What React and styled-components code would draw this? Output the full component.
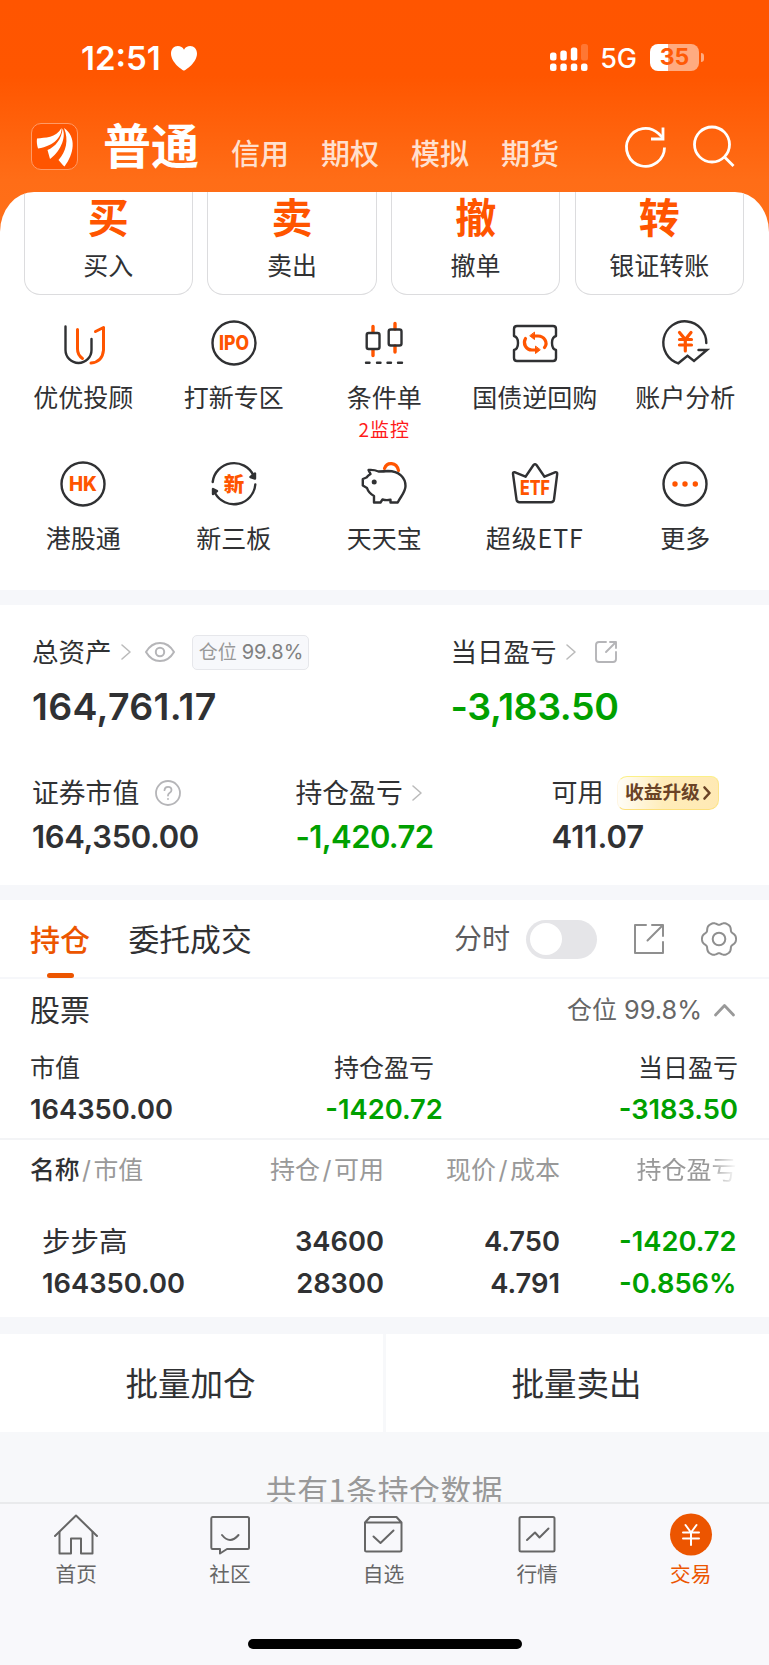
import * as React from "react";
import styled, { createGlobalStyle, css, ThemeProvider } from "styled-components";

const theme = {
  orange: "#ff5500",
  accent: "#ec5500",
  ink: "#303133",
  green: "#00a000",
  mute: "#999",
  band: "#f6f7fa",
};

const GlobalStyle = createGlobalStyle`
  * {
    box-sizing: border-box;
  }
  body {
    margin: 0;
    font-family: Inter, "Noto Sans CJK SC", sans-serif;
    color: ${theme.ink};
    -webkit-font-smoothing: antialiased;
  }
  svg {
    display: block;
    flex: none;
    overflow: visible;
  }
`;

const Phone = styled.div`
  width: 769px;
  height: 1665px;
  display: flex;
  flex-direction: column;
  overflow: hidden;
  background: #f7f8fa;
`;

const Text = styled.span`
  display: block;
  white-space: nowrap;
  line-height: 1;
  font-size: ${({ size }) => size}px;
  font-weight: ${({ weight }) => weight || 400};
  color: ${({ color }) => color || "inherit"};
  letter-spacing: ${({ spacing }) => spacing || 0}px;
  ${({ cjk }) =>
    cjk &&
    css`
      font-family: "Noto Sans CJK SC", sans-serif;
    `}
`;

/* ---------- header ---------- */

const Top = styled.header`
  height: 232px;
  margin-bottom: -40px;
  flex: none;
  color: #fff;
  background: linear-gradient(#ff5500 0, #ff5600 76px, #ff6d17 180px, #ff7019 232px);
`;

const StatusBar = styled.div`
  height: 116px;
  padding: 0 65px 0 81px;
  display: flex;
  align-items: center;
`;

const StatusRight = styled.div`
  margin-left: auto;
  display: flex;
  align-items: center;
`;

const Battery = styled.div`
  width: 49px;
  height: 27px;
  margin: -2px 0 0 13px;
  padding-top: 1px;
  border-radius: 8px;
  background: linear-gradient(90deg, #fff 36%, #ffab80 36%);
  display: flex;
  align-items: center;
  justify-content: center;
`;

const BatteryNub = styled.div`
  width: 3px;
  height: 9px;
  margin: -2px 0 0 2px;
  border-radius: 0 4px 4px 0;
  background: #ffab80;
`;

const NavBar = styled.nav`
  height: 76px;
  padding: 7px 34px 0 31px;
  display: flex;
`;

const Logo = styled.div`
  width: 47px;
  height: 47px;
  border: 1px solid #ff9a66;
  border-radius: 10px;
  background: #ff5500;
`;

const AccountTabs = styled.div`
  display: flex;
  padding: 17px 0 0 32px;
  gap: 32px;
`;

const NavIcons = styled.div`
  margin-left: auto;
  display: flex;
  gap: 27px;
  padding-top: 3px;
`;

/* ---------- white sheet ---------- */

const Sheet = styled.section`
  height: 398px;
  flex: none;
  background: #fff;
  border-radius: 34px 34px 0 0 / 40px 40px 0 0;
  overflow: hidden;
`;

const Cards = styled.div`
  display: grid;
  grid-template-columns: repeat(4, 169.5px);
  gap: 14.2px;
  padding-left: 23.5px;
  height: 103px;
`;

const Card = styled.div`
  border: 1.5px solid #dcdcde;
  border-top: 0;
  border-radius: 0 0 16px 16px;
  display: flex;
  flex-direction: column;
  align-items: center;
  padding-top: 6px;
  gap: 15px;
`;

const Grid = styled.div`
  display: grid;
  grid-template-columns: repeat(5, 150.5px);
  grid-auto-rows: 141px;
  padding: 24px 0 0 8px;
`;

const Cell = styled.div`
  display: flex;
  flex-direction: column;
  align-items: center;

  .Cell-label {
    margin-top: 16.5px;
  }
  .Cell-note {
    margin-top: 10px;
  }
`;

/* ---------- assets ---------- */

const Band = styled.div`
  height: ${({ height }) => height || 15}px;
  flex: none;
  background: ${theme.band};
`;

const Assets = styled.section`
  height: 280px;
  flex: none;
  padding-top: 29px;
  background: #fff;
`;

const AssetRow = styled.div`
  display: grid;
  grid-template-columns: ${({ columns }) => columns};
  padding-left: 32px;
  height: ${({ height }) => height}px;
`;

const Label = styled.div`
  height: 36px;
  display: flex;
  align-items: center;
`;

const Tag = styled.div`
  height: 35px;
  width: 117px;
  margin-left: 17px;
  padding-left: 2px;
  border: 1.5px solid #e6e7eb;
  border-radius: 5px;
  background: #f7f8fb;
  display: flex;
  align-items: center;
  justify-content: center;
  gap: 5px;
`;

const Upgrade = styled.div`
  height: 34px;
  width: 102px;
  margin-left: 13px;
  padding-left: 7.5px;
  border: 1.5px solid;
  border-color: #fbf088 #fde58a #fde07c #fff6e2;
  border-radius: 10px 8px 10px 8px;
  background: linear-gradient(90deg, #fffdf8, #ffedba 45%, #ffe9b4);
  display: flex;
  align-items: center;
  gap: 3px;
`;

/* ---------- positions ---------- */

const White = styled.section`
  flex: none;
  background: #fff;
`;

const PositionTabs = styled.div`
  height: 79px;
  padding: 1px 32px 0 30px;
  display: flex;
  align-items: center;
  border-bottom: 2px solid #f6f7fa;
`;

const PositionTab = styled.div`
  height: 77px;
  margin-right: ${({ gap }) => gap || 0}px;
  padding-top: 24px;
  display: flex;
  flex-direction: column;
  align-items: center;
  gap: 18px;

  &:after {
    content: "";
    width: 27px;
    height: 6px;
    border-radius: 3px;
    background: ${({ active }) => (active ? theme.accent : "transparent")};
  }
`;

const Toggle = styled.div`
  width: 71px;
  height: 39px;
  margin: 0 37px 0 16px;
  padding: 3.5px 4px;
  border-radius: 20px;
  background: #e5e5e8;

  &:after {
    content: "";
    display: block;
    width: 32px;
    height: 32px;
    border-radius: 50%;
    background: #fff;
  }
`;

const GroupHead = styled.div`
  height: 62px;
  padding: 0 34px 0 30px;
  display: flex;
  align-items: center;
`;

const Summary = styled.div`
  height: 99px;
  padding: 15px 31px 0 30px;
  display: grid;
  grid-template-columns: 1fr 1fr 1fr;
  border-bottom: 2px solid #f3f4f6;
`;

const SummaryItem = styled.div`
  display: flex;
  flex-direction: column;
  align-items: ${({ align }) => align};
  gap: 15px;
`;

const Columns = styled.div`
  height: ${({ height }) => height}px;
  padding: 0 32.5px 0 ${({ indent }) => indent}px;
  display: grid;
  grid-template-columns: 1fr 176px 176.5px;
  align-items: center;
  justify-items: end;
`;

const FirstColumns = styled.div`
  width: 100%;
  display: flex;
  justify-content: space-between;
`;

const Slash = styled.span`
  margin: 0 2.5px;
  &:after {
    content: "/";
  }
`;

const Fade = styled.div`
  -webkit-mask-image: linear-gradient(90deg, #000 72%, transparent 100%);
  mask-image: linear-gradient(90deg, #000 72%, transparent 100%);
`;

const Batch = styled.div`
  flex: none;
  height: 98px;
  display: grid;
  grid-template-columns: 383px 383px;
  gap: 3px;
`;

const BatchButton = styled.div`
  display: flex;
  align-items: center;
  justify-content: center;
  padding: 4px 2px 0 0;
  background: #fff;
`;

const Footnote = styled.div`
  height: 70px;
  flex: none;
  overflow: hidden;
  padding-top: 42px;
  display: flex;
  justify-content: center;
`;

/* ---------- tab bar ---------- */

const TabBar = styled.footer`
  flex: 1;
  border-top: 2px solid #e9eaec;
  background: #f8f8fb;
  display: flex;
  flex-direction: column;
  align-items: center;
`;

const TabList = styled.div`
  width: 768px;
  height: 135px;
  margin-right: 2px;
  padding-top: 10px;
  display: grid;
  grid-template-columns: repeat(5, 1fr);
`;

const Tab = styled.div`
  display: flex;
  flex-direction: column;
  align-items: center;
  gap: 9px;
  color: ${({ active }) => (active ? theme.accent : "#666")};
`;

const HomeIndicator = styled.div`
  width: 274px;
  height: 10px;
  border-radius: 5px;
  background: #000;
`;

/* ---------- icons ---------- */

const Svg = ({ w = 48, h = w, stroke = theme.ink, width = 2.4, children, ...rest }) => (
  <svg
    width={w}
    height={h}
    viewBox={`0 0 ${w} ${h}`}
    fill="none"
    stroke={stroke}
    strokeWidth={width}
    strokeLinecap="round"
    strokeLinejoin="round"
    {...rest}
  >
    {children}
  </svg>
);

const IconWord = ({ y, size, children, ...rest }) => (
  <text
    x="24"
    y={y}
    fontSize={size}
    fontWeight="800"
    fontFamily='Inter, "Noto Sans CJK SC", sans-serif'
    textAnchor="middle"
    fill={theme.orange}
    stroke="none"
    {...rest}
  >
    {children}
  </text>
);

const Heart = () => (
  <Svg w={28} h={26} stroke="none" style={{ marginLeft: 9 }}>
    <path
      fill="#fff"
      d="M14 25.5C12.5 25.5 1 17.5 1 8.5C1 4 4 1 7.8 1C10.5 1 12.8 2.3 14 4.7C15.2 2.3 17.5 1 20.2 1C24 1 27 4 27 8.5C27 17.5 15.5 25.5 14 25.5Z"
    />
  </Svg>
);

const Signal = () => (
  <Svg w={39} h={27} stroke="none" style={{ marginRight: 12, marginTop: -2 }}>
    <g fill="#fff">
      <rect x="1" y="8.5" width="6.5" height="8" rx="2.5" />
      <rect x="11.3" y="6.5" width="6.5" height="10" rx="2.5" />
      <rect x="21.8" y="3.5" width="6.5" height="13" rx="2.5" />
      <rect x="32" y="0" width="7" height="16.5" rx="2.5" opacity="0.2" />
      <rect x="1" y="19.5" width="6.5" height="7.5" rx="2.5" />
      <rect x="11.3" y="19.5" width="6.5" height="7.5" rx="2.5" />
      <rect x="21.8" y="19.5" width="6.5" height="7.5" rx="2.5" />
      <rect x="32" y="19.5" width="6.5" height="7.5" rx="2.5" />
    </g>
  </Svg>
);

const LogoMark = () => (
  <Svg w={45} h={45} stroke="none">
    <g fill="#fff">
      <path d="M5 14.5C13 13.5 24 14 29.5 4C30 12 23 22 6 24.5C5 21 4.5 18 5 14.5Z" />
      <path d="M15.5 26C23 23 30 15 30.5 4.5C35 14 27 29 18 35Z" />
      <path d="M32 4C45 13 42 30 32.5 42.5C30.5 41 28.5 38 26.5 36C34 28 37 16 32 4Z" />
    </g>
  </Svg>
);

const Refresh = () => (
  <Svg w={42} stroke="#fff" width={2.8} strokeLinecap="butt" strokeLinejoin="miter">
    <path d="M40.5 21.5A19 19 0 1 1 34.5 7.5L39 12" />
    <path d="M39 1.5V13H27" />
  </Svg>
);

const Search = () => (
  <Svg w={42} stroke="#fff" width={2.8} strokeLinecap="butt">
    <circle cx="19" cy="18.5" r="17.5" />
    <path d="M31 30.5L40.5 40" />
  </Svg>
);

const Chevron = () => (
  <Svg w={10} h={16} stroke="#bbb" width={1.6} style={{ marginLeft: 9 }}>
    <path d="M1 1L9 8L1 15" />
  </Svg>
);

const Eye = () => (
  <Svg w={30} h={20} stroke="#b5b5b8" width={2} style={{ marginLeft: 14 }}>
    <path d="M1 10C8-2 22-2 29 10C22 22 8 22 1 10Z" />
    <circle cx="15" cy="10" r="4.2" />
  </Svg>
);

const ShareSmall = () => (
  <Svg w={22} stroke="#b5b5b8" width={1.9} style={{ marginLeft: 19 }}>
    <path d="M11 1H4Q1 1 1 4V18Q1 21 4 21H18Q21 21 21 18V11" />
    <path d="M11 11L21 1M15 1H21V7" />
  </Svg>
);

const ShareLarge = () => (
  <Svg w={30} stroke="#8f8f8f" width={2} style={{ marginRight: 37 }}>
    <path d="M12 1H1V29H29V18" />
    <path d="M13.5 16.5L29 1M18 1H29V12" />
  </Svg>
);

const Question = () => (
  <Svg w={26} stroke="#b5b5b8" width={1.8} style={{ marginLeft: 16 }}>
    <circle cx="13" cy="13" r="12" />
    <path d="M9.5 10.2Q9.7 6.8 13 6.8Q16.5 6.8 16.5 10Q16.5 11.8 14.5 13Q13 14 13 15.5M13 18.8V19" />
  </Svg>
);

// six soft teeth, one pointing straight left and one straight right
const gearPath = Array.from({ length: 120 }, (_, i) => {
  const a = (i / 120) * Math.PI * 2;
  const r = 15.9 + 1.4 * Math.cos(6 * a) - 0.3 * Math.cos(12 * a);
  return `${i ? "L" : "M"}${(18 + r * Math.cos(a)).toFixed(2)} ${(18 + r * Math.sin(a)).toFixed(2)}`;
}).join("");

const Gear = () => (
  <Svg w={36} stroke="#8f8f8f" width={2}>
    <path d={`${gearPath}Z`} />
    <circle cx="18" cy="18" r="6.3" />
  </Svg>
);

const O = theme.orange;

const shortcuts = [
  {
    label: "优优投顾",
    icon: (
      <Svg>
        <path d="M18.5 10.5V30Q18.5 36 23.5 39.5M36.5 12.5L44.5 8.5V31Q43.5 43 32 44" stroke={O} strokeWidth="3" />
        <path d="M6.5 7.5V31A13 13 0 0 0 32.5 31V20" />
      </Svg>
    ),
  },
  {
    label: "打新专区",
    icon: (
      <Svg>
        <circle cx="24" cy="24" r="21.5" />
        <IconWord y="31" size="19.5" textLength="30" lengthAdjust="spacingAndGlyphs">IPO</IconWord>
      </Svg>
    ),
  },
  {
    label: "条件单",
    note: "2监控",
    icon: (
      <Svg>
        <path d="M13 7.5V13M13 31V36.5M35 4.5V10M35 27V33" stroke={O} strokeWidth="3.4" />
        <rect x="6.7" y="14" width="12.8" height="16" rx="2" />
        <rect x="28.7" y="10.5" width="12.8" height="16" rx="2" />
        <path d="M6 43.7H9.5M17 43.7H20.5M27.5 43.7H31M38 43.7H42" />
      </Svg>
    ),
  },
  {
    label: "国债逆回购",
    icon: (
      <Svg>
        <path d="M6 7H42Q45 7 45 10V17Q41 18 41 24Q41 30 45 31V39Q45 42 42 42H6Q3 42 3 39V31Q7 30 7 24Q7 18 3 17V10Q3 7 6 7Z" />
        <path d="M14.5 19.5C11.5 24.5 15 31 21 31H25M33.5 28.5C37.5 23.5 33 17 27 17H23" stroke={O} strokeWidth="3.2" />
        <path d="M23.5 13.5V20.5L19 17ZM24.5 27.5V34.5L29 31Z" fill={O} stroke={O} strokeWidth="1" />
      </Svg>
    ),
  },
  {
    label: "账户分析",
    icon: (
      <Svg>
        <path d="M45.3 24A21.5 21.5 0 1 0 17.3 44.3L26.5 36.8L33 42L46 31H37.5" strokeLinejoin="miter" />
        <path d="M18.5 13.5L24.3 20.5L30 13.5M18.5 20.5H30.5M18.5 26H30.5M24.3 20.5V32" stroke={O} strokeWidth="3.2" />
      </Svg>
    ),
  },
  {
    label: "港股通",
    icon: (
      <Svg>
        <circle cx="24" cy="24" r="21.5" />
        <IconWord y="31" size="19.5" textLength="28" lengthAdjust="spacingAndGlyphs">HK</IconWord>
      </Svg>
    ),
  },
  {
    label: "新三板",
    icon: (
      <Svg>
        <path d="M2.7 22A21.5 21.5 0 0 1 43.5 15.5M45.3 24.5A21.5 21.5 0 0 1 5 33" />
        <path d="M40.5 17L45 13.5V18.5ZM3 29V34L7 31Z" fill={theme.ink} />
        <IconWord y="31.5" size="20.5" fontWeight="900">新</IconWord>
      </Svg>
    ),
  },
  {
    label: "天天宝",
    icon: (
      <Svg>
        <path d="M24.5 8.5C27 1.5 36.5 2 38.5 10.5" stroke={O} strokeWidth="3.2" />
        <path d="M8.5 10Q14 9.5 18.5 11.5Q24 11.5 28 11C39 11 45.5 17.5 45.5 26C45.5 32 41 36 37.7 42.5H30.5V39.8Q26 40.5 22.5 39.5L20.5 42.5H14V36Q8.5 33 7 28L2.8 25.5V19L6.5 17.5Q8 15.5 10.5 14Z" />
        <circle cx="14.2" cy="22" r="2.5" fill={theme.ink} stroke="none" />
      </Svg>
    ),
  },
  {
    label: "超级ETF",
    spacing: 0.9,
    icon: (
      <Svg>
        <path d="M3.5 12.2L14.5 16.7L22.5 5Q24 3.5 25.5 5L33.5 16.7L44.5 12.2Q46.5 12 46.2 14L43 39.5Q42.5 42.3 40 42.3H8.5Q6 42.3 5.5 39.5L2 14Q1.7 12 3.5 12.2Z" />
        <IconWord y="35" size="20" textLength="30" lengthAdjust="spacingAndGlyphs">ETF</IconWord>
      </Svg>
    ),
  },
  {
    label: "更多",
    icon: (
      <Svg>
        <circle cx="24" cy="24" r="21.5" />
        <g fill={O} stroke="none">
          <circle cx="14" cy="24" r="2.7" />
          <circle cx="24" cy="24" r="2.7" />
          <circle cx="34.3" cy="24" r="2.7" />
        </g>
      </Svg>
    ),
  },
];

const cards = [
  ["买", "买入"],
  ["卖", "卖出"],
  ["撤", "撤单"],
  ["转", "银证转账"],
];

const tabs = [
  {
    label: "首页",
    icon: (
      <>
        <path d="M1 22L22 1.5L43 22" />
        <path d="M5.5 18V39.5H17V24.5H27V39.5H38.5V18" />
      </>
    ),
  },
  {
    label: "社区",
    icon: (
      <>
        <path d="M4.5 3H39.5Q41 3 41 4.5V33.5Q41 35 39.5 35H19L12 39.5V35H4.5Q3.3 35 3.3 33.5V4.5Q3.3 3 4.5 3Z" />
        <path d="M14 21Q22 31 30.5 21" />
      </>
    ),
  },
  {
    label: "自选",
    icon: (
      <>
        <path d="M9 3H35.5L40.5 8.5V36Q40.5 37.5 39 37.5H5.5Q4 37.5 4 36V8.5ZM4 8.5H40.5" />
        <path d="M12.5 22.5L19.5 29L32.5 16.5" />
      </>
    ),
  },
  {
    label: "行情",
    icon: (
      <>
        <rect x="4.5" y="3" width="35" height="34.5" rx="1.5" />
        <path d="M12 26L20 18.5L24.5 23.5L33.5 14.5" />
      </>
    ),
  },
  {
    label: "交易",
    active: true,
    icon: (
      <>
        <circle cx="22" cy="20.5" r="21" fill={theme.accent} stroke="none" />
        <path d="M16.5 11L22 18.5L27.5 11M14 18.5H30M14 24.5H30M22 18.5V31" stroke="#fff" />
      </>
    ),
  },
];

const Header = () => (
  <Top>
    <StatusBar>
      <Text size={33} weight={600}>12:51</Text>
      <Heart />
      <StatusRight>
        <Signal />
        <Text size={27} weight={500}>5G</Text>
        <Battery>
          <Text size={23} weight={700} color="#ff5a05">35</Text>
        </Battery>
        <BatteryNub />
      </StatusRight>
    </StatusBar>
    <NavBar>
      <Logo>
        <LogoMark />
      </Logo>
      <Text size={48} weight={700} style={{ marginLeft: 25 }}>普通</Text>
      <AccountTabs>
        {["信用", "期权", "模拟", "期货"].map((name) => (
          <Text key={name} size={29} weight={500} color="#ffe0cf">{name}</Text>
        ))}
      </AccountTabs>
      <NavIcons>
        <Refresh />
        <Search />
      </NavIcons>
    </NavBar>
  </Top>
);

const AssetPanel = () => (
  <Assets>
    <AssetRow columns="418.5px 1fr" height={141}>
      <div>
        <Label>
          <Text size={26.5}>总资产</Text>
          <Chevron />
          <Eye />
          <Tag>
            <Text size={19} color="#999">仓位</Text>
            <Text size={20} color="#808080">99.8%</Text>
          </Tag>
        </Label>
        <Text size={37.5} weight={600} spacing={0.3} style={{ marginTop: 17.5 }}>164,761.17</Text>
      </div>
      <div>
        <Label>
          <Text size={26.5}>当日盈亏</Text>
          <Chevron />
          <ShareSmall />
        </Label>
        <Text size={37.5} weight={600} spacing={-0.4} color={theme.green} style={{ marginTop: 17.5 }}>-3,183.50</Text>
      </div>
    </AssetRow>
    <AssetRow columns="263.5px 256px 1fr" height={100}>
      <div>
        <Label>
          <Text size={26.8}>证券市值</Text>
          <Question />
        </Label>
        <Text size={31} weight={600} spacing={-0.35} style={{ marginTop: 10 }}>164,350.00</Text>
      </div>
      <div>
        <Label>
          <Text size={26.8}>持仓盈亏</Text>
          <Chevron />
        </Label>
        <Text size={31} weight={600} spacing={-0.6} color={theme.green} style={{ marginTop: 10 }}>-1,420.72</Text>
      </div>
      <div>
        <Label>
          <Text size={26}>可用</Text>
          <Upgrade>
            <Text size={18.7} weight={700} color="#6a4326">收益升级</Text>
            <Svg w={8} h={14} stroke="#6a4326" width={2.6}>
              <path d="M1.5 1.5L6.5 7L1.5 12.5" />
            </Svg>
          </Upgrade>
        </Label>
        <Text size={31} weight={600} style={{ marginTop: 10 }}>411.07</Text>
      </div>
    </AssetRow>
  </Assets>
);

const Positions = () => (
  <White>
    <PositionTabs>
      <PositionTab active gap={38.5}>
        <Text size={30} weight={500} color={theme.accent}>持仓</Text>
      </PositionTab>
      <PositionTab>
        <Text size={30.8}>委托成交</Text>
      </PositionTab>
      <Text size={28} color="#5c5c5e" style={{ marginLeft: "auto" }}>分时</Text>
      <Toggle />
      <ShareLarge />
      <Gear />
    </PositionTabs>
    <GroupHead>
      <Text size={30}>股票</Text>
      <Text size={25} color="#666" style={{ marginLeft: "auto" }}>仓位</Text>
      <Text size={25.3} color="#666" style={{ margin: "0 12px 0 7px" }}>99.8%</Text>
      <Svg w={21} h={12} stroke="#999" width={2.8}>
        <path d="M1.5 11L10.5 1.5L19.5 11" />
      </Svg>
    </GroupHead>
    <Summary>
      <SummaryItem align="start">
        <Text size={25}>市值</Text>
        <Text size={27.3} weight={600}>164350.00</Text>
      </SummaryItem>
      <SummaryItem align="center">
        <Text size={25}>持仓盈亏</Text>
        <Text size={27.3} weight={600} color={theme.green}>-1420.72</Text>
      </SummaryItem>
      <SummaryItem align="end">
        <Text size={25}>当日盈亏</Text>
        <Text size={27.3} weight={600} color={theme.green}>-3183.50</Text>
      </SummaryItem>
    </Summary>
    <Columns height={61} indent={30}>
      <FirstColumns>
        <Text size={24.8} color={theme.mute}>
          <span style={{ color: theme.ink, fontWeight: 500 }}>名称</span>
          <Slash />
          市值
        </Text>
        <Text size={25} color={theme.mute}>
          持仓
          <Slash />
          可用
        </Text>
      </FirstColumns>
      <Text size={25} color={theme.mute}>
        现价
        <Slash />
        成本
      </Text>
      <Fade>
        <Text size={25} color={theme.mute}>持仓盈亏</Text>
      </Fade>
    </Columns>
    <div style={{ height: 20 }} />
    <Columns height={42} indent={42}>
      <FirstColumns>
        <Text size={28.5}>步步高</Text>
        <Text size={27.3} weight={600}>34600</Text>
      </FirstColumns>
      <Text size={27.3} weight={600}>4.750</Text>
      <Text size={27.3} weight={600} color={theme.green}>-1420.72</Text>
    </Columns>
    <Columns height={42} indent={42}>
      <FirstColumns>
        <Text size={27.3} weight={600}>164350.00</Text>
        <Text size={27.3} weight={600}>28300</Text>
      </FirstColumns>
      <Text size={27.3} weight={600}>4.791</Text>
      <Text size={27.3} weight={600} color={theme.green}>-0.856%</Text>
    </Columns>
    <div style={{ height: 12 }} />
  </White>
);

const App = () => (
  <ThemeProvider theme={theme}>
    <GlobalStyle />
    <Phone>
      <Header />
      <Sheet>
        <Cards>
          {cards.map(([glyph, label]) => (
            <Card key={label}>
              <Text size={41} weight={700} color={theme.orange}>{glyph}</Text>
              <Text size={25}>{label}</Text>
            </Card>
          ))}
        </Cards>
        <Grid>
          {shortcuts.map(({ label, note, icon, spacing }) => (
            <Cell key={label}>
              {icon}
              <Text className="Cell-label" size={25} spacing={spacing} cjk>{label}</Text>
              {note && <Text className="Cell-note" size={19} spacing={1} color="#ff1a1a" cjk>{note}</Text>}
            </Cell>
          ))}
        </Grid>
      </Sheet>
      <Band />
      <AssetPanel />
      <Band />
      <Positions />
      <Band height={17} />
      <Batch>
        <BatchButton>
          <Text size={32.5}>批量加仓</Text>
        </BatchButton>
        <BatchButton>
          <Text size={32.5}>批量卖出</Text>
        </BatchButton>
      </Batch>
      <Footnote>
        <Text size={30.8} spacing={0.6} color={theme.mute} cjk>共有1条持仓数据</Text>
      </Footnote>
      <TabBar>
        <TabList>
          {tabs.map(({ label, icon, active }) => (
            <Tab key={label} active={active}>
              <Svg w={44} h={42} stroke="currentColor" width={2}>
                {icon}
              </Svg>
              <Text size={20.7}>{label}</Text>
            </Tab>
          ))}
        </TabList>
        <HomeIndicator />
      </TabBar>
    </Phone>
  </ThemeProvider>
);

export default App;
